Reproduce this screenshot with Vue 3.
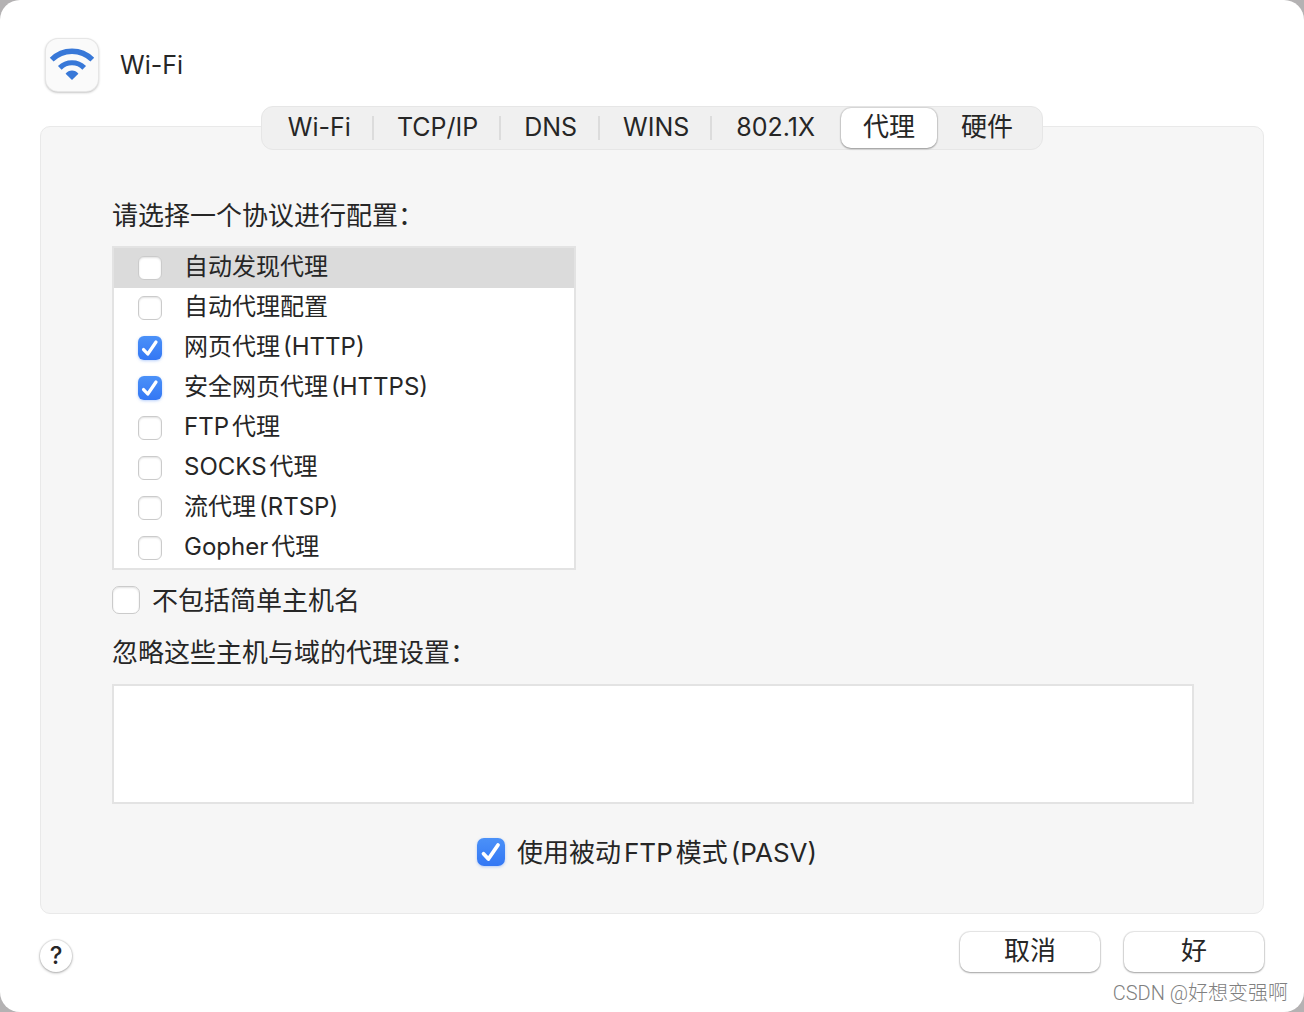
<script setup>
import { ref } from 'vue'

const tabs = ['Wi-Fi', 'TCP/IP', 'DNS', 'WINS', '802.1X', '代理', '硬件']
const active = ref(5)
const selected = ref(0)

const protocols = ref([
  { id: 'discovery', parts: ['自动发现代理'], on: false },
  { id: 'pac', parts: ['自动代理配置'], on: false },
  { id: 'http', parts: ['网页代理', '(HTTP)'], on: true },
  { id: 'https', parts: ['安全网页代理', '(HTTPS)'], on: true },
  { id: 'ftp', parts: ['FTP', '代理'], on: false },
  { id: 'socks', parts: ['SOCKS', '代理'], on: false },
  { id: 'rtsp', parts: ['流代理', '(RTSP)'], on: false },
  { id: 'gopher', parts: ['Gopher', '代理'], on: false },
])

const excludeSimple = ref(false)
const passive = ref(true)
const bypass = ref('')
</script>

<template>
  <div class="window">
    <header class="head">
      <svg class="wifi" viewBox="1 1 52 52" aria-hidden="true">
        <g fill="none" stroke="#3878d8">
          <path d="M6.7 21.7A28.7 28.7 0 0 1 47.3 21.7" stroke-width="5.4" />
          <path d="M14.8 29.8A17.3 17.3 0 0 1 39.2 29.8" stroke-width="5.2" />
        </g>
        <path d="M27 42L20.6 35.8Q23.2 32.6 27 32.6T33.4 35.8Z" fill="#3878d8" />
      </svg>
      <h1 class="title">Wi-Fi</h1>
    </header>

    <main class="panel">
      <div class="tabs" role="tablist">
        <button
          v-for="(tab, i) in tabs"
          :key="tab"
          type="button"
          role="tab"
          class="tab"
          :class="{ active: i === active, divided: i < active - 1, cjk: i > 4 }"
          :aria-selected="i === active"
          @click="active = i"
        >{{ tab }}</button>
      </div>

      <div class="body">
        <p class="caption">请选择一个协议进行配置：</p>
        <ul class="list">
          <li
            v-for="(p, i) in protocols"
            :key="p.id"
            class="row"
            :class="{ selected: i === selected }"
            @click="selected = i"
          >
            <input :id="p.id" v-model="p.on" type="checkbox" class="check" />
            <label :for="p.id" class="parts"><span v-for="s in p.parts" :key="s">{{ s }}</span></label>
          </li>
        </ul>

        <div class="option">
          <input id="simple" v-model="excludeSimple" type="checkbox" class="check large" />
          <label for="simple">不包括简单主机名</label>
        </div>

        <label for="bypass" class="caption">忽略这些主机与域的代理设置：</label>
        <textarea id="bypass" v-model="bypass" class="bypass"></textarea>

        <div class="option passive">
          <input id="pasv" v-model="passive" type="checkbox" class="check large" />
          <label for="pasv" class="parts"><span>使用被动</span><span>FTP</span><span>模式</span><span>(PASV)</span></label>
        </div>
      </div>
    </main>

    <footer class="foot">
      <button type="button" class="help" aria-label="帮助">?</button>
      <div class="actions">
        <button type="button" class="push">取消</button>
        <button type="button" class="push">好</button>
      </div>
    </footer>
    <div class="watermark">CSDN @好想变强啊</div>
  </div>
</template>

<style>
body {
  margin: 0;
  background: #b4b2b3;
}
</style>

<style scoped>
.window {
  box-sizing: border-box;
  position: relative;
  min-height: 100vh;
  padding: 38px 40px 40px;
  border-radius: 20px;
  background: #fff;
  color: #262626;
  font: 26px/36px Inter, "Noto Sans CJK SC", sans-serif;
  display: flex;
  flex-direction: column;
}
button {
  font: inherit;
  color: inherit;
  border: 0;
  padding: 0;
}
.head {
  display: flex;
  align-items: center;
  gap: 22px;
  padding-left: 6px;
}
.wifi {
  width: 52px;
  height: 52px;
  margin: 1px 0;
  border-radius: 12px;
  background: #fafafa;
  box-shadow: 0 0 0 1px #e6e6e6, 0 1px 3px rgba(0, 0, 0, 0.45);
}
.title {
  margin: 0;
  font-size: 25px;
  font-weight: 400;
}
.panel {
  flex: 1;
  margin-top: 34px;
  border: 1px solid #e9e9e9;
  border-radius: 10px;
  background: #f6f6f6;
  display: flex;
  flex-direction: column;
  align-items: center;
}
.tabs {
  display: flex;
  box-sizing: border-box;
  height: 44px;
  margin-top: -21px;
  padding: 1px 3px;
  border: 1px solid #e6e6e6;
  border-radius: 12px;
  background: #f0f0f0;
}
.tab {
  position: relative;
  padding: 0 26px 2px 24px;
  border-radius: 10px;
  background: none;
  line-height: 36px;
  font-size: 25px;
}
.tab.cjk {
  font-size: 26px;
}
.tab.divided {
  padding: 0 23px 2px;
}
.tab.divided::after {
  content: "";
  position: absolute;
  right: 0;
  top: 8px;
  width: 2px;
  height: 24px;
  background: #dcdcdc;
}
.tab.active {
  padding: 0 22px 2px;
  background: #fff;
  box-shadow: 0 0 1px 1px rgba(0, 0, 0, 0.1), 0 1px 2px rgba(0, 0, 0, 0.3);
}
.body {
  box-sizing: border-box;
  width: 100%;
  padding: 48px 69px 42px 71px;
  display: flex;
  flex-direction: column;
}
.caption {
  margin: 0;
}
.list {
  box-sizing: border-box;
  width: 464px;
  max-width: 100%;
  margin: 12px 0 0;
  padding: 0;
  list-style: none;
  border: 2px solid #e3e3e3;
  background: #fff;
  font-size: 24px;
}
.row {
  display: flex;
  align-items: center;
  gap: 22px;
  height: 40px;
  padding-left: 24px;
}
.row label {
  padding-bottom: 3px;
}
.row.selected {
  background: #dbdbdb;
}
.parts {
  display: flex;
  gap: 3px;
}
.check {
  appearance: none;
  flex: none;
  box-sizing: border-box;
  width: 24px;
  height: 24px;
  margin: 0;
  border: 1px solid #cbcbcb;
  border-radius: 6px;
  background: #fff;
  box-shadow: inset 0 1px 2px rgba(0, 0, 0, 0.12);
}
.check.large {
  width: 28px;
  height: 28px;
  border-radius: 7px;
}
.check:checked {
  border: 0;
  background: url("data:image/svg+xml,%3Csvg xmlns='http://www.w3.org/2000/svg' viewBox='0 0 28 28'%3E%3Cpath d='M6.5 15.8L11.4 21L21 7' fill='none' stroke='white' stroke-width='3.8' stroke-linecap='round' stroke-linejoin='round'/%3E%3C/svg%3E") center / 100% 100%, linear-gradient(#4b91f8, #3377f4);
  box-shadow: 0 1px 3px rgba(51, 119, 244, 0.35);
}
.option {
  display: flex;
  align-items: center;
  gap: 12px;
  margin: 11px 0 16px;
}
.option label {
  padding-top: 2px;
}
.bypass {
  box-sizing: border-box;
  width: 100%;
  height: 120px;
  margin: 13px 0 0;
  padding: 8px;
  border: 2px solid #e3e3e3;
  border-radius: 0;
  background: #fff;
  font: inherit;
  resize: none;
  outline: 0;
}
.option.passive {
  justify-content: center;
  margin: 29px 0 0;
  padding-right: 12px;
}
.foot {
  display: flex;
  align-items: flex-end;
  justify-content: space-between;
  margin-top: 18px;
}
.help {
  width: 32px;
  height: 32px;
  border-radius: 50%;
  background: #fff;
  font-size: 24px;
  font-weight: 500;
  line-height: 32px;
  box-shadow: 0 0 1px 1px rgba(0, 0, 0, 0.08), 0 1px 3px rgba(0, 0, 0, 0.3);
}
.actions {
  display: flex;
  gap: 24px;
}
.push {
  width: 140px;
  height: 40px;
  padding-bottom: 2px;
  border-radius: 10px;
  background: #fff;
  box-shadow: 0 0 1px 1px rgba(0, 0, 0, 0.1), 0 1px 2px rgba(0, 0, 0, 0.3);
}
.watermark {
  position: absolute;
  right: 16px;
  bottom: 4px;
  font: 300 20px/30px Roboto, "Noto Sans CJK SC", sans-serif;
  color: #808080;
}
</style>
